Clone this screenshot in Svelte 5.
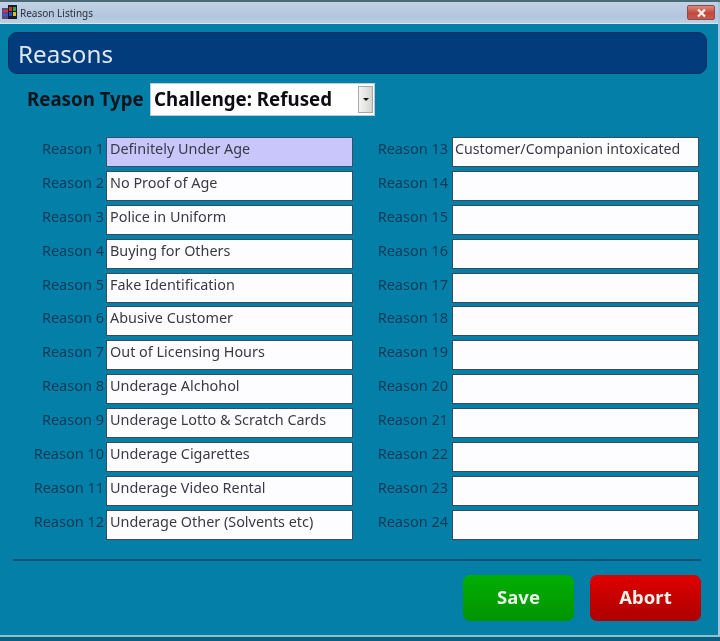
<script>
  const values = [
    'Definitely Under Age', 'No Proof of Age', 'Police in Uniform', 'Buying for Others',
    'Fake Identification', 'Abusive Customer', 'Out of Licensing Hours', 'Underage Alchohol',
    'Underage Lotto & Scratch Cards', 'Underage Cigarettes', 'Underage Video Rental', 'Underage Other (Solvents etc)',
    'Customer/Companion intoxicated', '', '', '', '', '', '', '', '', '', '', ''
  ];
  const reasons = values.map((value, i) => ({ n: i + 1, value }));
  const left = reasons.slice(0, 12);
  const right = reasons.slice(12);
</script>

<div class="screen">
  <div class="topstrip"></div>
  <div class="window">
    <header class="titlebar">
      <svg class="appicon" width="16" height="15" viewBox="0 0 16 15">
        <rect x="0" y="3" width="6" height="11" fill="#5a4a7a" />
        <rect x="1" y="5" width="5" height="2" fill="#d8344a" />
        <rect x="1" y="9" width="5" height="2" fill="#3a5ad0" />
        <rect x="6" y="0" width="9" height="14" fill="#1a1a2a" />
        <rect x="7" y="2" width="3" height="4" fill="#c83a2a" />
        <rect x="11" y="2" width="3" height="4" fill="#2fa83a" />
        <rect x="7" y="7" width="3" height="4" fill="#2a4ac8" />
        <rect x="11" y="7" width="3" height="4" fill="#e0c020" />
      </svg>
      <span class="title">Reason Listings</span>
      <button class="close" aria-label="Close">
        <svg width="11" height="10" viewBox="0 0 11 10">
          <path d="M2 1.5 L9 8.5 M9 1.5 L2 8.5" stroke="#f2eeee" stroke-width="2.4" />
        </svg>
      </button>
    </header>

    <main class="body">
      <h1 class="banner">Reasons</h1>

      <div class="type-row">
        <span class="type-label">Reason Type</span>
        <div class="select">
          <span class="select-value">Challenge: Refused</span>
          <span class="select-btn"><i class="arrow"></i></span>
        </div>
      </div>

      <div class="columns">
        <div class="column col-left">
          {#each left as r}
            <div class="row">
              <span class="label">Reason {r.n}</span>
              <div class="field" class:active={r.n === 1}>{r.value}</div>
            </div>
          {/each}
        </div>
        <div class="column col-right">
          {#each right as r}
            <div class="row">
              <span class="label">Reason {r.n}</span>
              <div class="field">{r.value}</div>
            </div>
          {/each}
        </div>
      </div>

      <hr class="divider" />

      <footer class="actions">
        <button class="btn save">Save</button>
        <button class="btn abort">Abort</button>
      </footer>
    </main>
  </div>
</div>

<style>
  :global(body) {
    margin: 0;
    background: #0a5f80;
  }

  .screen {
    width: 720px;
    height: 641px;
    overflow: hidden;
    font-family: "Noto Sans", "Open Sans", sans-serif;
    display: flex;
    flex-direction: column;
    filter: blur(0.4px);
  }

  .topstrip {
    height: 2px;
    background: #4a6a78;
    flex-shrink: 0;
  }

  .window {
    height: 635px;
    box-sizing: border-box;
    border-bottom: 2px solid #8fc0d0;
    border-right: 2px solid #a9c6d8;
    display: flex;
    flex-direction: column;
    background: #0480a8;
  }

  .titlebar {
    height: 21px;
    flex-shrink: 0;
    display: flex;
    align-items: center;
    padding: 0 3px 0 2px;
    background: linear-gradient(to bottom, #c3d2e4, #b2c6de 70%, #bcd0e4);
    border-bottom: 1px solid #d6e6f0;
  }

  .appicon {
    margin-right: 2px;
  }

  .title {
    font-size: 10px;
    color: #2a3038;
  }

  .close {
    margin-left: auto;
    width: 28px;
    height: 15px;
    padding: 0;
    display: flex;
    align-items: center;
    justify-content: center;
    border: 1px solid #8a4a56;
    border-radius: 2px;
    background: linear-gradient(to bottom, #dc8a78, #c4483a 55%, #c85a4a);
  }

  .body {
    flex: 1;
    display: flex;
    flex-direction: column;
    padding: 8px 11px 0 8px;
  }

  .banner {
    margin: 0;
    height: 42px;
    box-sizing: border-box;
    padding-left: 9px;
    font-size: 24.2px;
    font-weight: 400;
    line-height: 41px;
    color: #dce8f0;
    background: #033c7c;
    border: 1px solid #04305e;
    border-radius: 9px;
  }

  .type-row {
    display: flex;
    align-items: center;
    margin-top: 9px;
    padding-left: 19px;
    height: 33px;
  }

  .type-label {
    width: 123px;
    padding-bottom: 2px;
    font-size: 18.7px;
    font-weight: 700;
    color: #06141e;
    white-space: nowrap;
  }

  .select {
    width: 225px;
    height: 33px;
    box-sizing: border-box;
    display: flex;
    align-items: center;
    justify-content: space-between;
    padding: 2px 1px 2px 3px;
    background: #fff;
    border: 1px solid #b8ccd4;
  }

  .select-value {
    padding-bottom: 2px;
    font-size: 18.7px;
    font-weight: 700;
    color: #0c0c14;
  }

  .select-btn {
    width: 15px;
    height: 100%;
    display: flex;
    align-items: center;
    justify-content: center;
    background: linear-gradient(to right, #f4f4f2, #d4d6d2);
    border: 1px solid #a4a8a8;
    box-sizing: border-box;
  }

  .arrow {
    border-left: 3px solid transparent;
    border-right: 3px solid transparent;
    border-top: 3px solid #111;
  }

  .columns {
    display: flex;
    gap: 1px;
    margin-top: 21px;
  }

  .column {
    display: flex;
    flex-direction: column;
    gap: 3.9px;
    width: 345px;
  }

  .row {
    display: flex;
    align-items: flex-start;
    justify-content: flex-end;
    height: 30px;
  }

  .label {
    margin-right: 2px;
    font-size: 14.5px;
    line-height: 23px;
    color: #0a3a58;
    white-space: nowrap;
  }

  .col-right .label {
    margin-right: 4px;
  }

  .field {
    width: 247px;
    height: 30px;
    box-sizing: border-box;
    padding-left: 3px;
    font-size: 14.4px;
    line-height: 21px;
    color: #3a3a46;
    background: #fdfdff;
    border: 1px solid #3a4a5c;
    white-space: nowrap;
    overflow: hidden;
  }

  .col-right .field {
    padding-left: 2px;
    font-size: 14.2px;
  }

  .field.active {
    background: #c8c6fa;
    border-color: #34506c;
  }

  .divider {
    width: 688px;
    margin: 19px 0 0 5px;
    border: 0;
    height: 2px;
    background: #0e5478;
  }

  .actions {
    display: flex;
    justify-content: flex-end;
    gap: 16px;
    margin-top: 14px;
    padding-right: 6px;
  }

  .btn {
    width: 111px;
    height: 46px;
    padding: 0 0 2px;
    border: 0;
    border-radius: 7px;
    font-family: inherit;
    font-size: 18.5px;
    font-weight: 700;
    color: #e8f2e8;
  }

  .save {
    background: linear-gradient(to bottom, #02ae02, #029402);
  }

  .abort {
    background: linear-gradient(to bottom, #e00000, #ac0000);
  }
</style>
